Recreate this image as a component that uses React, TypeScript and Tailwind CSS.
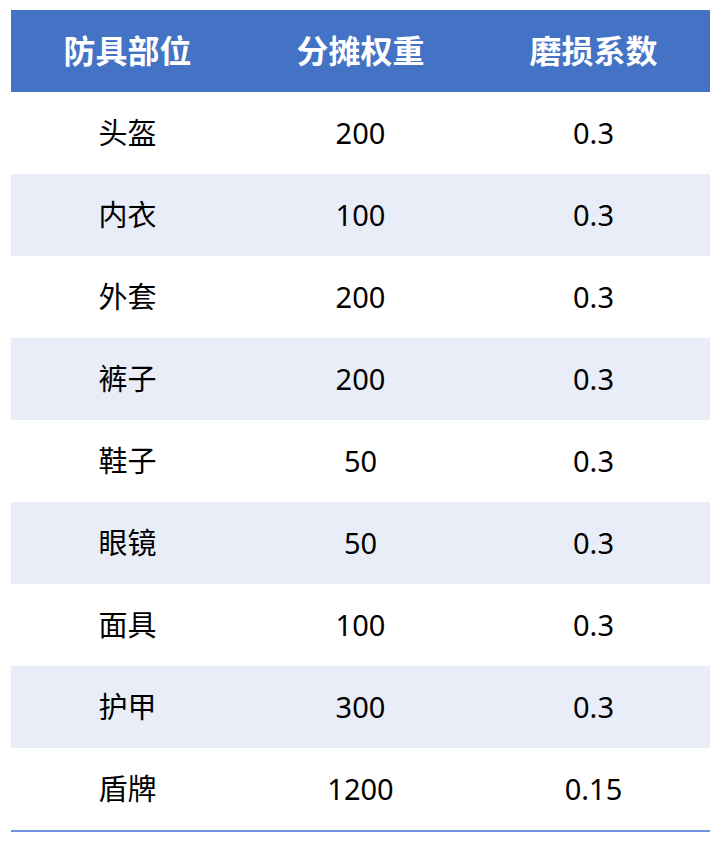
const rows: [string, string, string][] = [
  ["头盔", "200", "0.3"],
  ["内衣", "100", "0.3"],
  ["外套", "200", "0.3"],
  ["裤子", "200", "0.3"],
  ["鞋子", "50", "0.3"],
  ["眼镜", "50", "0.3"],
  ["面具", "100", "0.3"],
  ["护甲", "300", "0.3"],
  ["盾牌", "1200", "0.15"],
];

const headers = ["防具部位", "分摊权重", "磨损系数"];

export default function App() {
  return (
    <div
      className="w-[720px] h-[842px] bg-white pt-[10px] pl-[11px]"
      style={{ fontFamily: '"Noto Sans", "Noto Sans CJK SC", sans-serif' }}
    >
      <div className="w-[699px] border-b-2 border-[#6f93d8]">
        {/* header */}
        <div className="grid grid-cols-3 h-[82px] bg-[#4472c4] text-white font-bold text-[32px]">
          {headers.map((h) => (
            <div key={h} className="flex items-center justify-center">
              {h}
            </div>
          ))}
        </div>

        {/* body */}
        {rows.map((r, i) => (
          <div
            key={r[0]}
            className={`grid grid-cols-3 h-[82px] text-[29px] text-black ${
              i % 2 === 1 ? "bg-[#e9edf7]" : "bg-white"
            }`}
          >
            {r.map((cell, j) => (
              <div key={j} className="flex items-center justify-center">
                {cell}
              </div>
            ))}
          </div>
        ))}
      </div>
    </div>
  );
}
